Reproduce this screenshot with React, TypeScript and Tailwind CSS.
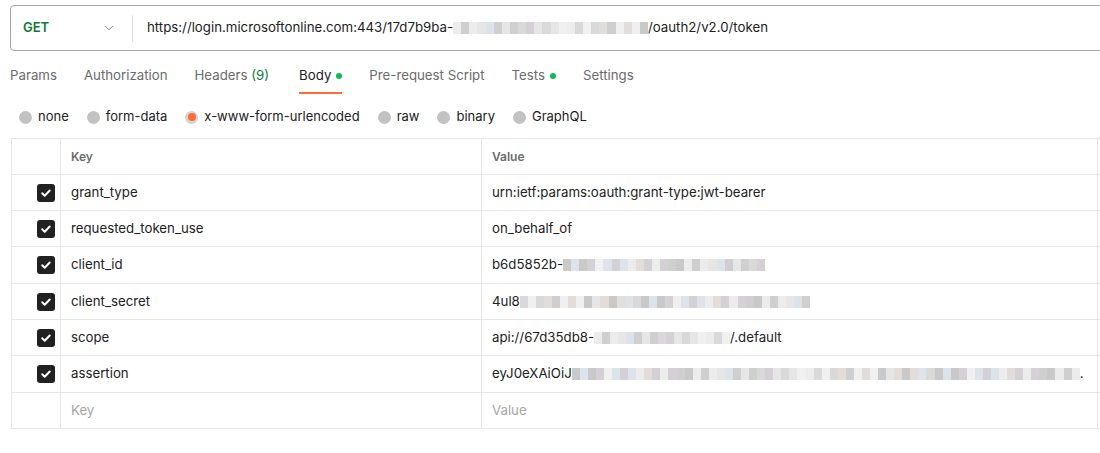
import { ChevronDown } from "lucide-react";

const font = { fontFamily: "Inter, 'Noto Sans', sans-serif" };

// pixelated redaction strip
const Blur = ({ width, seed = 1 }: { width: number; seed?: number }) => {
  const shades = ["#d9d9d9", "#e6e6e6", "#cfcfcf", "#ececec", "#d4d0d6", "#dde3ea", "#c9c9c9", "#e2ddd9", "#f0f0f0"];
  const count = Math.floor(width / 8);
  const cells = Array.from({ length: count }, (_, i) => shades[(i * 7 + seed * 3 + ((i * i) % 5)) % shades.length]);
  return (
    <span className="inline-flex h-[12px] align-middle" style={{ width }}>
      {cells.map((c, i) => (
        <span key={i} className="h-full flex-1" style={{ background: c }} />
      ))}
    </span>
  );
};

const Check = () => (
  <span className="flex h-[18px] w-[18px] items-center justify-center rounded-[3px] bg-[#212121]">
    <svg width="12" height="12" viewBox="0 0 12 12" fill="none">
      <path d="M2.2 6.3l2.5 2.4 5-5.2" stroke="white" strokeWidth="2" strokeLinecap="round" strokeLinejoin="round" />
    </svg>
  </span>
);

const Radio = ({ label, active }: { label: string; active?: boolean }) => (
  <div className="flex items-center gap-[6px]">
    {active ? (
      <span className="flex h-[13px] w-[13px] items-center justify-center rounded-full bg-[#d4d4d4]">
        <span className="h-[8px] w-[8px] rounded-full bg-[#ff6c37]" />
      </span>
    ) : (
      <span className="h-[13px] w-[13px] rounded-full bg-[#c2c2c2]" />
    )}
    <span className="text-[13px] text-[#212121]">{label}</span>
  </div>
);

const rows: { key: string; value: React.ReactNode; tall?: boolean }[] = [
  { key: "grant_type", value: "urn:ietf:params:oauth:grant-type:jwt-bearer" },
  { key: "requested_token_use", value: "on_behalf_of" },
  { key: "client_id", value: <>b6d5852b-<Blur width={202} seed={2} /></>, tall: true },
  { key: "client_secret", value: <>4ul8<Blur width={290} seed={3} /></> },
  { key: "scope", value: <>api://67d35db8-<Blur width={136} seed={4} />/.default</> },
  { key: "assertion", value: <>eyJ0eXAiOiJ<Blur width={508} seed={5} />.</>, tall: true },
];

export default function App() {
  return (
    <div className="h-[453px] w-[1100px] overflow-hidden bg-white text-[#212121]" style={font}>
      <div className="pl-[10px] pt-[5px]">
        <div className="flex h-[46px] w-[1120px] items-center rounded-[4px] border border-[#a6a6a6]">
          <div className="flex w-[121px] items-center justify-between pl-[12px] pr-[16px]">
            <span className="text-[13px] font-semibold text-[#0b7a3a]">GET</span>
            <ChevronDown size={14} strokeWidth={1.5} className="text-[#6b6b6b]" />
          </div>
          <div className="h-[27px] w-px bg-[#e0e0e0]" />
          <div className="pl-[14px] text-[13.25px] text-[#212121]">
            https://login.microsoftonline.com:443/17d7b9ba-<Blur width={195} seed={1} />/oauth2/v2.0/token
          </div>
        </div>
      </div>

      <div className="flex h-[45px] items-center gap-[27px] pl-[10px] pt-[4px] text-[13.25px] text-[#6b6b6b]">
        <span>Params</span>
        <span>Authorization</span>
        <span className="mr-[3px]">
          Headers <span className="text-[#0b7a3a]">(9)</span>
        </span>
        <span className="relative flex items-center gap-[5px] text-[#212121]">
          Body <span className="h-[6px] w-[6px] rounded-full bg-[#0cbb52]" />
          <span className="absolute -bottom-[9px] left-0 right-0 h-[2px] bg-[#ff6c37]" />
        </span>
        <span>Pre-request Script</span>
        <span className="flex items-center gap-[5px]">
          Tests <span className="h-[6px] w-[6px] rounded-full bg-[#0cbb52]" />
        </span>
        <span>Settings</span>
      </div>

      <div className="flex h-[42px] items-center gap-[18px] pl-[19px]">
        <Radio label="none" />
        <Radio label="form-data" />
        <Radio label="x-www-form-urlencoded" active />
        <Radio label="raw" />
        <Radio label="binary" />
        <Radio label="GraphQL" />
      </div>

      <div className="ml-[11px] w-[1120px] border-l border-t border-[#e6e6e6]">
        <div className="flex h-[36px] border-b border-[#e6e6e6] text-[12px] font-semibold text-[#6b6b6b]">
          <div className="w-[49px] border-r border-[#e6e6e6]" />
          <div className="flex w-[421px] items-center border-r border-[#e6e6e6] pl-[10px]">Key</div>
          <div className="flex w-[616px] items-center border-r border-[#e6e6e6] pl-[10px]">Value</div>
          <div className="flex-1" />
        </div>
        {rows.map((r) => (
          <div key={r.key} className={`flex border-b border-[#e6e6e6] text-[13.25px] ${r.tall ? "h-[37px]" : "h-[36px]"}`}>
            <div className="flex w-[49px] items-center justify-end border-r border-[#e6e6e6] pr-[5px]">
              <Check />
            </div>
            <div className="flex w-[421px] items-center border-r border-[#e6e6e6] pl-[10px]">{r.key}</div>
            <div className="flex w-[616px] items-center whitespace-nowrap border-r border-[#e6e6e6] pl-[10px]">{r.value}</div>
            <div className="flex-1" />
          </div>
        ))}
        <div className="flex h-[36px] border-b border-[#e6e6e6] text-[13.25px] text-[#a6a6a6]">
          <div className="w-[49px] border-r border-[#e6e6e6]" />
          <div className="flex w-[421px] items-center border-r border-[#e6e6e6] pl-[10px]">Key</div>
          <div className="flex w-[616px] items-center border-r border-[#e6e6e6] pl-[10px]">Value</div>
          <div className="flex-1" />
        </div>
      </div>
    </div>
  );
}
